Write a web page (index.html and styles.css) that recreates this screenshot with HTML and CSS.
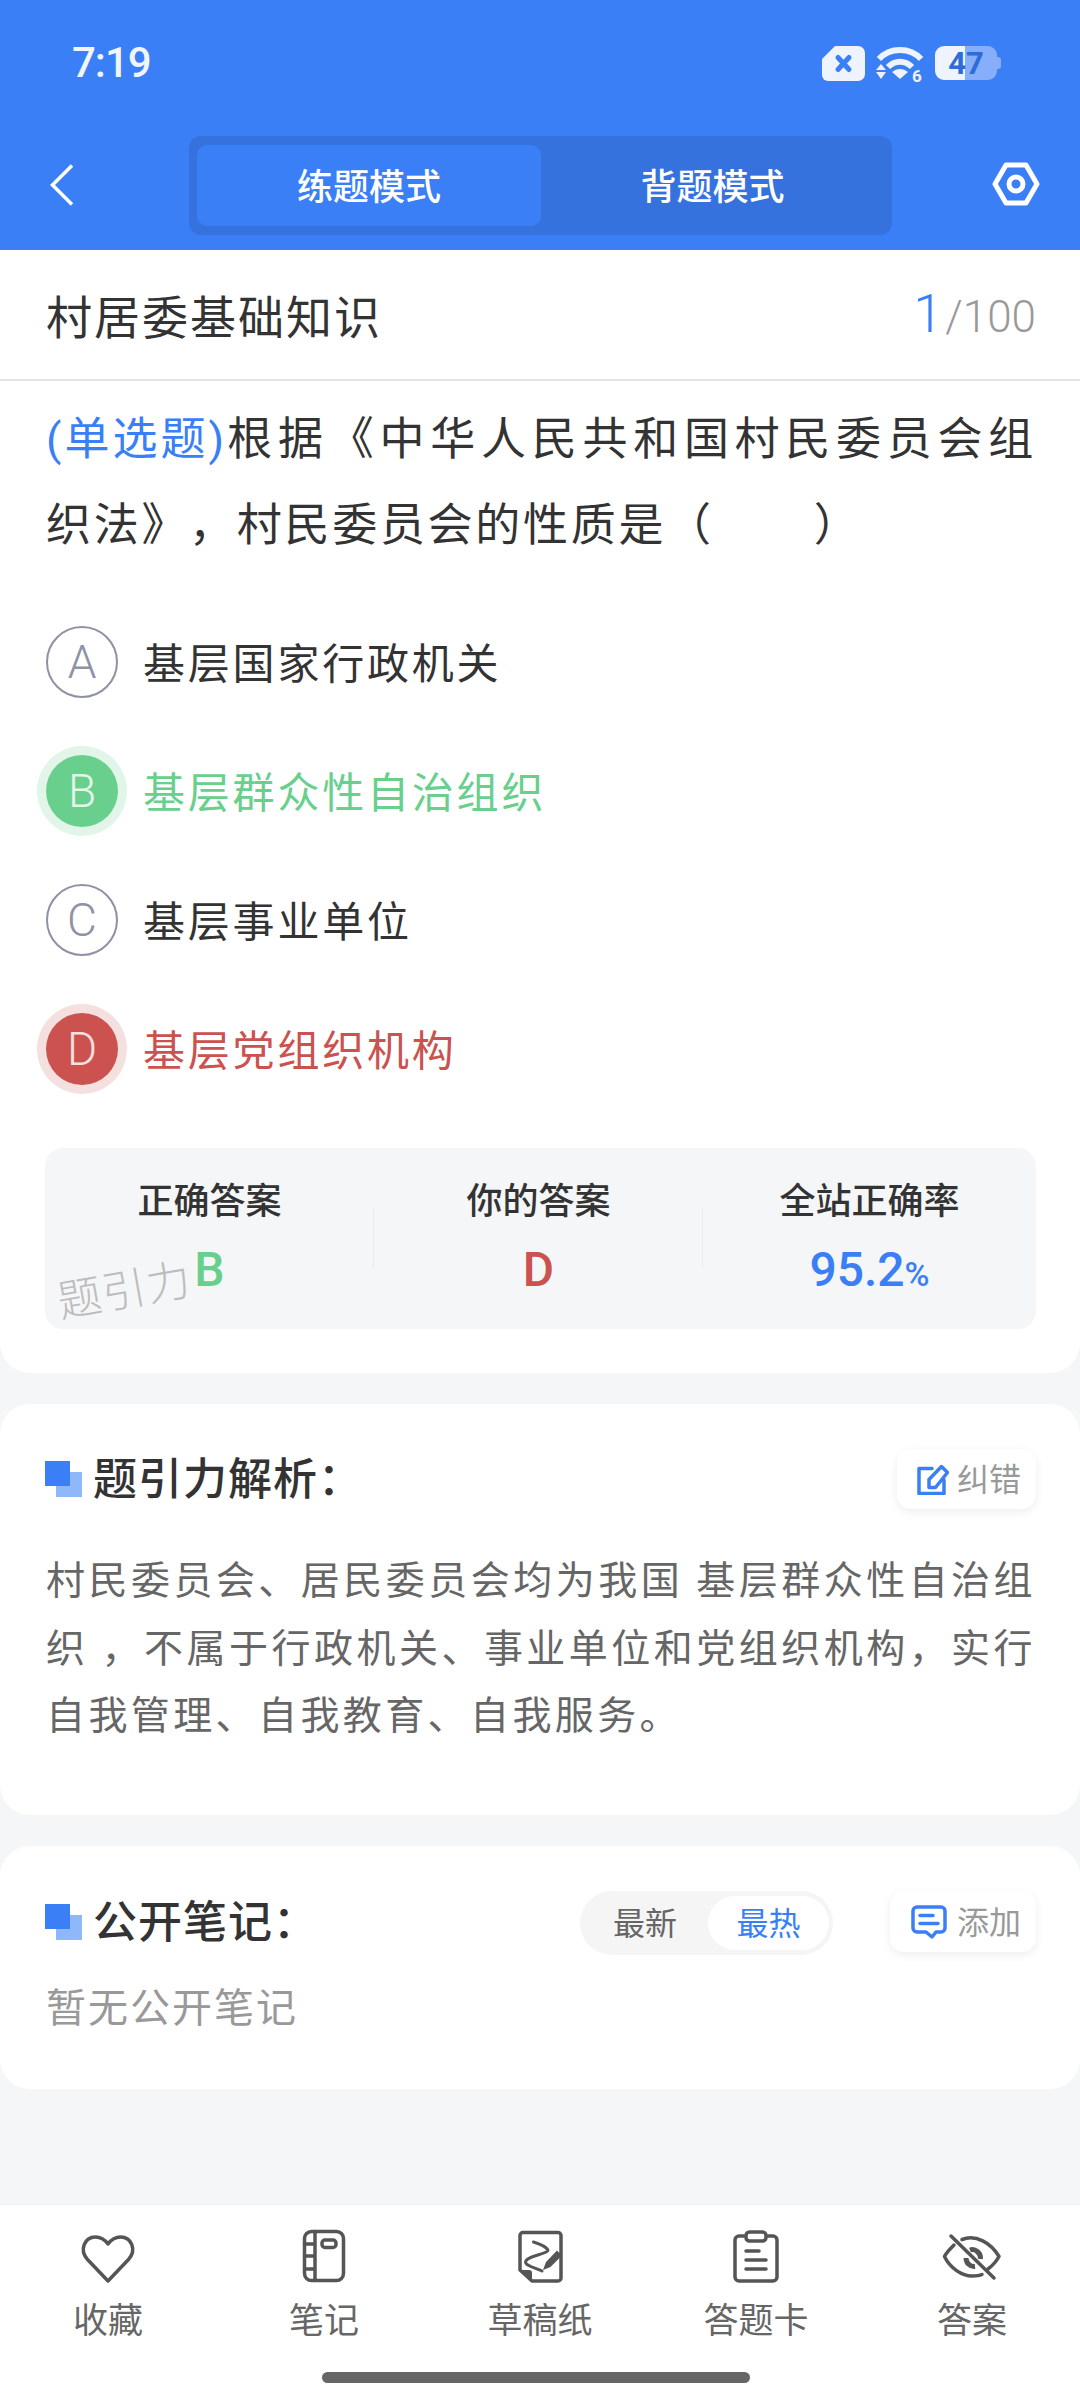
FILE: index.html
```html
<!DOCTYPE html>
<html lang="zh">
<head>
<meta charset="utf-8">
<title>村居委基础知识</title>
<link rel="stylesheet" href="styles.css">
</head>
<body>
<div class="screen">
  <header class="top">
    <div class="status">
      <span class="time">7:19</span>
      <div class="status-icons">
        <svg class="ic-sim" viewBox="0 0 43 35"><path class="f-light" d="M13 0H36a7 7 0 0 1 7 7V28a7 7 0 0 1-7 7H6a6 6 0 0 1-6-6V13Z"/><path class="s-x" d="M16 11.500L27 23.500M27 11.500L16 23.500"/></svg>
        <svg class="ic-wifi" viewBox="0 0 50 42"><path class="s-w" d="M3 13C14 1 34 1 45 13"/><path class="s-w" d="M12 21C19 14 29 14 36 21"/><path class="f-light" d="M16 26C21 22 27 22 32 26L24 33Z"/><path class="f-light" d="M5 18L10 24H0ZM0 26H10L5 33Z"/><text class="wifi-six" x="36" y="36">6</text></svg>
        <div class="battery"><span>47</span></div>
      </div>
    </div>
    <div class="toolbar">
      <svg class="ic-back" viewBox="0 0 24 42"><path d="M22 1.500L2.500 21L22 40.500"/></svg>
      <div class="seg">
        <div class="seg-item seg-on"><span>练题模式</span></div>
        <div class="seg-item"><span>背题模式</span></div>
      </div>
      <svg class="ic-gear" viewBox="0 0 48 44"><path d="M14 3H34L45 22L34 41H14L3 22Z"/><circle cx="24" cy="22" r="7"/></svg>
    </div>
  </header>

  <section class="card card-q">
    <div class="q-head">
      <h1 class="q-title">村居委基础知识</h1>
      <div class="q-count"><span class="q-cur">1</span><span class="q-tot">/100</span></div>
    </div>
    <div class="q-body">
      <p class="q-text">
        <span class="q-line q-line-full"><span class="q-type">(单选题)</span>根据《中华人民共和国村民委员会组</span>
        <span class="q-line">织法》，村民委员会的性质是（<span class="q-blank"></span>）</span>
      </p>
      <ul class="opts">
        <li class="opt"><span class="badge">A</span><span class="opt-t">基层国家行政机关</span></li>
        <li class="opt opt-ok"><span class="badge">B</span><span class="opt-t">基层群众性自治组织</span></li>
        <li class="opt"><span class="badge">C</span><span class="opt-t">基层事业单位</span></li>
        <li class="opt opt-bad"><span class="badge">D</span><span class="opt-t">基层党组织机构</span></li>
      </ul>
      <div class="stats">
        <div class="stat"><div class="stat-k">正确答案</div><div class="stat-v v-ok">B</div></div>
        <div class="stat"><div class="stat-k">你的答案</div><div class="stat-v v-bad">D</div></div>
        <div class="stat stat-last"><div class="stat-k">全站正确率</div><div class="stat-v v-rate">95.2<small>%</small></div></div>
        <div class="mark">题引力</div>
      </div>
    </div>
  </section>

  <section class="card card-a">
    <div class="sec-head">
      <h2 class="sec-title"><i class="sq"></i>题引力解析：</h2>
      <div class="chip">
        <svg class="ic-chip" viewBox="0 0 32 32"><path class="s-b" d="M15 5.500H2V30.500H27V17"/><path class="s-b" d="M12 24.500V16.500L24.500 3.500L30.500 9.500L18.500 24.500Z"/></svg>
        <span class="chip-t">纠错</span>
      </div>
    </div>
    <p class="a-text">村民委员会、居民委员会均为我国 基层群众性自治组织 ，不属于行政机关、事业单位和党组织机构，实行自我管理、自我教育、自我服务。</p>
  </section>

  <section class="card card-n">
    <div class="sec-head sec-head-n">
      <h2 class="sec-title"><i class="sq"></i>公开笔记：</h2>
      <div class="sort"><span class="sort-item">最新</span><span class="sort-item sort-on">最热</span></div>
      <div class="chip chip-add">
        <svg class="ic-chip ic-add" viewBox="0 0 36 36"><path class="s-b" d="M6 3H30a4 4 0 0 1 4 4V24a4 4 0 0 1-4 4H25L21 33L15 28H6a4 4 0 0 1-4-4V7a4 4 0 0 1 4-4Z"/><path class="s-b" d="M9 11.500H22M9 19.500H27"/></svg>
        <span class="chip-t">添加</span>
      </div>
    </div>
    <p class="n-empty">暂无公开笔记</p>
  </section>

  <div class="spacer"></div>

  <nav class="nav">
    <div class="nav-row">
      <div class="nav-item">
        <svg viewBox="0 0 60 60"><path d="M30 55L9.500 33.500C1 24 6.500 11 17.500 11C23 11 27 14 30 18C33 14 37 11 42.500 11C53.500 11 59 24 50.500 33.500Z"/></svg>
        <span>收藏</span>
      </div>
      <div class="nav-item">
        <svg viewBox="0 0 60 60"><rect x="10.500" y="5.500" width="39" height="49" rx="7"/><path d="M21 5.500V54.500M10.500 18H21M10.500 30H21M10.500 43H21"/><rect x="28" y="14" width="14" height="7.500" rx="3"/></svg>
        <span>笔记</span>
      </div>
      <div class="nav-item">
        <svg viewBox="0 0 60 60"><path d="M13 6.500H48a3 3 0 0 1 3 3V52a3 3 0 0 1-3 3H22L10 44V9.500a3 3 0 0 1 3-3Z"/><path class="solid" d="M10 44H19a3 3 0 0 1 3 3V55Z"/><path class="thin" d="M23.500 16C30 18 36 21 38 24C38 28 16 30 15.500 36C15.500 40 26 42 32 45"/><path class="solid" d="M33 44L36 36L47 24.500L52 29.500L40.500 41Z"/></svg>
        <span>草稿纸</span>
      </div>
      <div class="nav-item">
        <svg viewBox="0 0 60 60"><path d="M18 10H13a4 4 0 0 0-4 4V51a4 4 0 0 0 4 4H47a4 4 0 0 0 4-4V14a4 4 0 0 0-4-4H42"/><rect x="20" y="6" width="20" height="9" rx="3.500"/><path d="M20 25H33M20 34H40M20 43H40"/></svg>
        <span>答题卡</span>
      </div>
      <div class="nav-item">
        <svg viewBox="0 0 60 60"><path d="M20 13.500C34 8 49 17 57 30.500C54 36 50 40 46 43"/><path d="M12 19C8 23 4 27 2.500 30.500C8 42 20 50 30 50C33 50 37 50 40 48.500"/><path class="thick" d="M24 32C24 37 28 41 33 40.500"/><path class="thick" d="M28 24C33 22 39 27 38.500 33"/><path d="M9 10L52 52"/></svg>
        <span>答案</span>
      </div>
    </div>
    <div class="home-bar"></div>
  </nav>
</div>
</body>
</html>
```

FILE: styles.css
```css
* { box-sizing: border-box; }
html, body { margin: 0; padding: 0; }
body {
  width: 1080px;
  height: 2400px;
  overflow: hidden;
  font-family: Roboto, "Noto Sans CJK SC", sans-serif;
  color: #333;
  background: #f5f6f8;
  text-spacing-trim: space-all;
}
h1, h2, p, ul { margin: 0; padding: 0; font-weight: 400; }
ul { list-style: none; }
.screen { width: 1080px; height: 2400px; display: flex; flex-direction: column; }

/* Header */
.top { height: 250px; background: #3b7ff7; flex: none; }
.status { height: 136px; padding: 42px 83px 0 72px; display: flex; justify-content: space-between; align-items: flex-start; }
.time { font-size: 42px; line-height: 42px; font-weight: 500; letter-spacing: -1px; color: #f1f5fe; }
.status-icons { display: flex; align-items: flex-start; margin-top: 4px; }
.ic-sim { width: 43px; height: 35px; }
.ic-wifi { width: 50px; height: 42px; margin: 0 -2px -4px 11px; }
.f-light { fill: #eef3fe; }
.s-x { fill: none; stroke: #3b7ff7; stroke-width: 5px; stroke-linecap: round; }
.s-w { fill: none; stroke: #eef3fe; stroke-width: 6px; }
.wifi-six { font-size: 17px; font-weight: 700; fill: #eef3fe; font-family: Roboto, sans-serif; }
.battery {
  position: relative;
  width: 62px;
  height: 34px;
  margin-left: 11px;
  border-radius: 9px;
  background: linear-gradient(90deg, #eef3fe 48%, #86aefb 48%);
  display: flex;
  align-items: center;
  justify-content: center;
  font-size: 31px;
  font-weight: 700;
  color: #2f6cd8;
}
.battery::after {
  content: "";
  position: absolute;
  right: -4px;
  top: 11px;
  width: 4px;
  height: 12px;
  border-radius: 0 3px 3px 0;
  background: #86aefb;
}
.toolbar { display: flex; align-items: flex-start; height: 114px; }
.ic-back { width: 24px; height: 42px; margin: 28px 0 0 50px; flex: none; fill: none; stroke: #fff; stroke-width: 3.500px; }
.seg { width: 703px; height: 99px; margin-left: 115px; padding: 9px 8px; background: #3572dd; border-radius: 12px; display: flex; flex: none; }
.seg-item { width: 344px; height: 81px; padding-bottom: 4px; border-radius: 10px; display: flex; align-items: center; justify-content: center; font-size: 36px; font-weight: 500; color: #fff; }
.seg-item + .seg-item { flex: 1; }
.seg-on { background: #3b7ff7; }
.ic-gear { width: 48px; height: 44px; margin: 26px 0 0 100px; flex: none; fill: none; stroke: #fff; stroke-width: 5px; stroke-linejoin: round; }

/* Cards */
.card { background: #fff; flex: none; }
.card-q { height: 1123px; border-radius: 0 0 30px 30px; }
.card-a { height: 411px; margin-top: 31px; border-radius: 30px; padding: 45px 44px 0 45px; }
.card-n { height: 243px; margin-top: 31px; border-radius: 30px; padding: 45px 44px 0 45px; }

.q-head { height: 131px; border-bottom: 2px solid #e2e3e5; padding: 0 44px 2px 46px; display: flex; justify-content: space-between; align-items: center; }
.q-title { font-size: 46px; letter-spacing: 2px; color: #333; }
.q-count { display: flex; align-items: baseline; color: #999; }
.q-cur { font-size: 54px; font-weight: 300; color: #3b7ff7; margin-right: 2px; }
.q-tot { font-size: 44px; font-weight: 300; }
.q-body { padding: 0 44px 0 46px; }
.q-text { margin-top: 16px; font-size: 45px; line-height: 86px; letter-spacing: 2.700px; color: #333; }
.q-line { display: block; }
.q-line-full { text-align: justify; text-align-last: justify; }
.q-blank { display: inline-block; width: 100px; }
.q-type { color: #3b7ff7; letter-spacing: 0; }

.opts { margin-top: 28px; }
.opt { display: flex; align-items: center; height: 129px; font-size: 42px; letter-spacing: 2.800px; color: #333; }
.opt-t { padding-bottom: 3px; }
.badge {
  width: 72px;
  height: 72px;
  margin-right: 25px;
  border-radius: 50%;
  flex: none;
  border: 2px solid #8e92a4;
  color: #8e92a4;
  display: flex;
  align-items: center;
  justify-content: center;
  font-size: 46px;
  font-weight: 300;
  letter-spacing: 0;
}
.opt-ok { color: #68cf8c; }
.opt-ok .badge { background: #68cf8c; border: 0; color: #e2f6ea; box-shadow: 0 0 0 9px #e1f5e9; }
.opt-bad { color: #cb524e; }
.opt-bad .badge { background: #cb524e; border: 0; color: #f5e0e0; box-shadow: 0 0 0 9px #f5e0e0; }

.stats { position: relative; height: 181px; margin: 35px 0 0 -1px; background: #f5f6f8; border-radius: 18px; display: flex; }
.stat { position: relative; width: 329px; text-align: center; padding-top: 31px; }
.stat-last { flex: 1; }
.stat + .stat::before { content: ""; position: absolute; left: -1px; top: 60px; width: 1px; height: 60px; background: #e9eaed; }
.stat-k { font-size: 36px; line-height: 46px; font-weight: 500; color: #333; }
.stat-v { font-size: 48px; line-height: 54px; margin-top: 18px; font-weight: 500; }
.stat-v small { font-size: 34px; }
.v-ok { color: #68cf8c; }
.v-bad { color: #cb524e; }
.v-rate { color: #3b7ff7; }
.mark { position: absolute; left: 12px; top: 116px; font-size: 44px; line-height: 54px; color: #bdbdbd; transform: rotate(-10deg); letter-spacing: 1px; font-weight: 300; }

/* Sections */
.sec-head { display: flex; justify-content: space-between; align-items: flex-start; height: 60px; }
.sec-title { position: relative; padding-left: 48px; font-size: 44px; line-height: 60px; font-weight: 500; color: #333; letter-spacing: 1px; margin-top: 1px; }
.sq { position: absolute; left: 0; top: 11px; width: 37px; height: 36px; }
.sq::before { content: ""; position: absolute; left: 11px; top: 11px; width: 26px; height: 25px; background: #8fb8fb; }
.sq::after { content: ""; position: absolute; left: 0; top: 0; width: 25px; height: 25px; background: #3b7ff7; }
.chip { width: 139px; height: 60px; padding-left: 20px; border-radius: 14px; background: #fff; box-shadow: 0 3px 10px rgba(0, 0, 0, .07); display: flex; align-items: center; font-size: 32px; color: #999; flex: none; }
.chip-t { padding-bottom: 4px; }
.ic-chip { width: 32px; height: 32px; margin-right: 8px; flex: none; }
.ic-add { width: 36px; height: 36px; margin-right: 10px; }
.s-b { fill: none; stroke: #3b7ff7; stroke-width: 3.500px; stroke-linejoin: round; stroke-linecap: round; }
.a-text { margin-top: 39px; padding-left: 1px; font-size: 39px; line-height: 67.500px; letter-spacing: 3.400px; color: #666; text-align: justify; }

.sec-head-n { justify-content: flex-start; }
.sec-head-n .sec-title { flex: none; width: 535px; margin-top: 2px; }
.sort { width: 253px; height: 64px; padding: 5px 5px 5px 33px; background: #f5f5f6; border-radius: 32px; display: flex; align-items: center; font-size: 32px; color: #666; flex: none; }
.sort-item { flex: none; padding-bottom: 4px; }
.sort-on { margin-left: 31px; width: 121px; height: 54px; display: flex; align-items: center; justify-content: center; background: #fff; border-radius: 27px; color: #3b7ff7; }
.chip-add { width: 146px; height: 61px; margin-left: 57px; padding-left: 21px; }
.n-empty { margin-top: 30px; padding-left: 1px; font-size: 40px; line-height: 56px; letter-spacing: 2px; color: #999; }

.spacer { flex: 1; }

/* Bottom nav */
.nav { height: 196px; background: #fff; flex: none; padding-top: 21px; border-top: 1px solid #f0f1f3; }
.nav-row { display: grid; grid-template-columns: repeat(5, 216px); }
.nav-item { display: flex; flex-direction: column; align-items: center; font-size: 35px; line-height: 44px; color: #666; }
.nav-item svg { width: 60px; height: 60px; margin-bottom: 14px; fill: none; stroke: #555; stroke-width: 3.500px; stroke-linecap: round; stroke-linejoin: round; }
.nav-item svg .solid { fill: #555; stroke: none; }
.nav-item svg .thin { stroke-width: 3px; }
.nav-item svg .thick { stroke-width: 5px; stroke-linecap: butt; }
.home-bar { width: 428px; height: 11px; margin: 28px 0 0 322px; background: #666; border-radius: 6px; }
```
